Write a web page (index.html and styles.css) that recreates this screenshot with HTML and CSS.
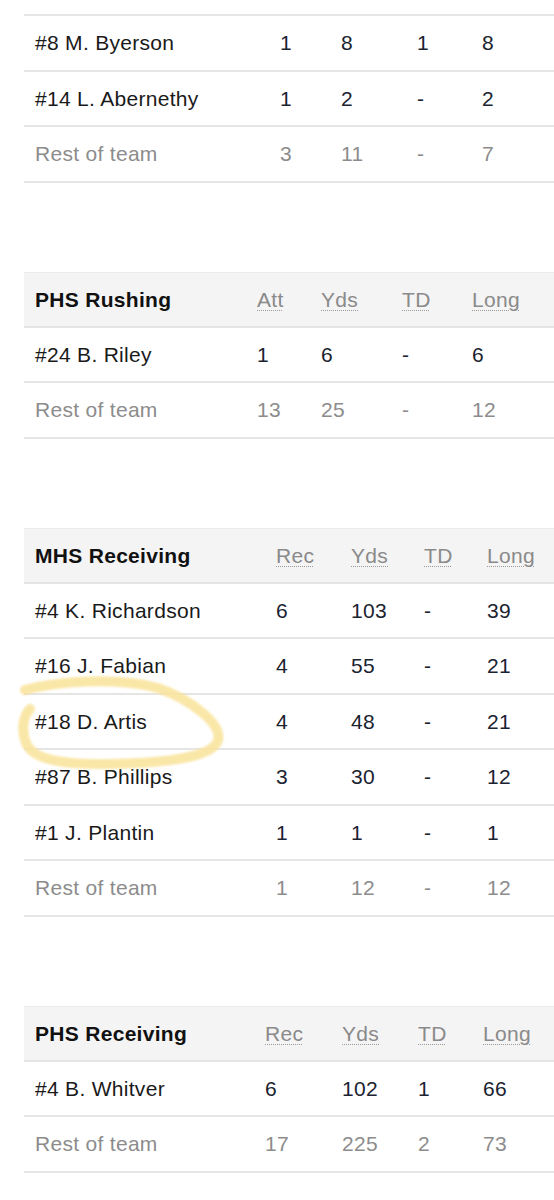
FILE: index.html
```html
<!DOCTYPE html>
<html lang="en">
<head>
<meta charset="utf-8">
<title>Box score</title>
<link rel="stylesheet" href="styles.css">
</head>
<body>
<main class="page">
  <section class="stat-block first">
    <table class="stats t-rush-m">
      <colgroup><col class="c1"><col class="c2"><col class="c3"><col class="c4"><col class="c5"></colgroup>
      <thead>
        <tr><th class="title">MHS Rushing</th><th><abbr title="Attempts">Att</abbr></th><th><abbr title="Yards">Yds</abbr></th><th><abbr title="Touchdowns">TD</abbr></th><th><abbr title="Longest">Long</abbr></th></tr>
      </thead>
      <tbody>
        <tr><td class="name">#2 T. Kennedy</td><td>2</td><td>9</td><td>-</td><td>6</td></tr>
        <tr><td class="name">#8 M. Byerson</td><td>1</td><td>8</td><td>1</td><td>8</td></tr>
        <tr><td class="name">#14 L. Abernethy</td><td>1</td><td>2</td><td>-</td><td>2</td></tr>
        <tr class="rest"><td class="name">Rest of team</td><td>3</td><td>11</td><td>-</td><td>7</td></tr>
      </tbody>
    </table>
  </section>

  <section class="stat-block">
    <table class="stats t-rush-p">
      <colgroup><col class="c1"><col class="c2"><col class="c3"><col class="c4"><col class="c5"></colgroup>
      <thead>
        <tr><th class="title">PHS Rushing</th><th><abbr title="Attempts">Att</abbr></th><th><abbr title="Yards">Yds</abbr></th><th><abbr title="Touchdowns">TD</abbr></th><th><abbr title="Longest">Long</abbr></th></tr>
      </thead>
      <tbody>
        <tr><td class="name">#24 B. Riley</td><td>1</td><td>6</td><td>-</td><td>6</td></tr>
        <tr class="rest"><td class="name">Rest of team</td><td>13</td><td>25</td><td>-</td><td>12</td></tr>
      </tbody>
    </table>
  </section>

  <section class="stat-block marked">
    <table class="stats t-rec-m">
      <colgroup><col class="c1"><col class="c2"><col class="c3"><col class="c4"><col class="c5"></colgroup>
      <thead>
        <tr><th class="title">MHS Receiving</th><th><abbr title="Receptions">Rec</abbr></th><th><abbr title="Yards">Yds</abbr></th><th><abbr title="Touchdowns">TD</abbr></th><th><abbr title="Longest">Long</abbr></th></tr>
      </thead>
      <tbody>
        <tr><td class="name">#4 K. Richardson</td><td>6</td><td>103</td><td>-</td><td>39</td></tr>
        <tr><td class="name">#16 J. Fabian</td><td>4</td><td>55</td><td>-</td><td>21</td></tr>
        <tr><td class="name">#18 D. Artis</td><td>4</td><td>48</td><td>-</td><td>21</td></tr>
        <tr><td class="name">#87 B. Phillips</td><td>3</td><td>30</td><td>-</td><td>12</td></tr>
        <tr><td class="name">#1 J. Plantin</td><td>1</td><td>1</td><td>-</td><td>1</td></tr>
        <tr class="rest"><td class="name">Rest of team</td><td>1</td><td>12</td><td>-</td><td>12</td></tr>
      </tbody>
    </table>
    <svg class="scribble" width="260" height="260" viewBox="0 0 260 260" aria-hidden="true">
      <defs>
        <filter id="soft" x="-10%" y="-10%" width="120%" height="120%">
          <feGaussianBlur stdDeviation="1.1"/>
        </filter>
      </defs>
      <path d="M 25 162 C 55 154, 115 148, 158 160 C 192 172, 222 196, 218 212 C 214 228, 172 235, 110 236 C 62 237, 32 231, 26 215 C 21 202, 23 188, 30 181"
            fill="none" stroke="#f9e39a" stroke-width="10" stroke-linecap="round" stroke-linejoin="round" filter="url(#soft)"/>
    </svg>
  </section>

  <section class="stat-block">
    <table class="stats t-rec-p">
      <colgroup><col class="c1"><col class="c2"><col class="c3"><col class="c4"><col class="c5"></colgroup>
      <thead>
        <tr><th class="title">PHS Receiving</th><th><abbr title="Receptions">Rec</abbr></th><th><abbr title="Yards">Yds</abbr></th><th><abbr title="Touchdowns">TD</abbr></th><th><abbr title="Longest">Long</abbr></th></tr>
      </thead>
      <tbody>
        <tr><td class="name">#4 B. Whitver</td><td>6</td><td>102</td><td>1</td><td>66</td></tr>
        <tr class="rest"><td class="name">Rest of team</td><td>17</td><td>225</td><td>2</td><td>73</td></tr>
      </tbody>
    </table>
  </section>
</main>
</body>
</html>
```

FILE: styles.css
```css
html, body {
  margin: 0;
  padding: 0;
  background: #ffffff;
}

body {
  font-family: "Liberation Sans", Arial, Helvetica, sans-serif;
  font-size: 21px;
  letter-spacing: 0.3px;
  color: #1a1a1a;
  overflow: hidden;
}

.page {
  display: flex;
  flex-direction: column;
  gap: 89.5px;
  padding-left: 24px;
}

.stat-block {
  position: relative;
}

.stat-block.first {
  margin-top: -95px;
}

.stats {
  width: 530px;
  table-layout: fixed;
  border-collapse: separate;
  border-spacing: 0;
}

.stats th,
.stats td {
  box-sizing: border-box;
  height: 55.5px;
  padding: 0 0 0 11px;
  text-align: left;
  vertical-align: middle;
  white-space: nowrap;
  border-bottom: 2px solid #e5e5e5;
  font-weight: normal;
  line-height: 1;
}

.stats thead th {
  background: #f4f4f4;
  color: #8a8a8a;
  border-top: 1px solid #ececec;
}

.stats thead th.title {
  color: #111111;
  font-weight: bold;
}

.stats abbr {
  text-decoration: underline dotted #9a9a9a;
  text-decoration-thickness: 1px;
  text-underline-offset: 3px;
}

.stats tbody td {
  color: #1b2330;
}

.stats tbody td.name {
  color: #1a1a1a;
}

.stats tbody tr.rest td,
.stats tbody tr.rest td.name {
  color: #8c8c8c;
}

/* column widths, per table */
.t-rush-m .c1 { width: 245px; }
.t-rush-m .c2 { width: 61px; }
.t-rush-m .c3 { width: 76px; }
.t-rush-m .c4 { width: 65px; }
.t-rush-m .c5 { width: 83px; }

.t-rush-p .c1 { width: 222px; }
.t-rush-p .c2 { width: 64px; }
.t-rush-p .c3 { width: 81px; }
.t-rush-p .c4 { width: 70px; }
.t-rush-p .c5 { width: 93px; }

.t-rec-m .c1 { width: 241px; }
.t-rec-m .c2 { width: 75px; }
.t-rec-m .c3 { width: 73px; }
.t-rec-m .c4 { width: 63px; }
.t-rec-m .c5 { width: 78px; }

.t-rec-p .c1 { width: 230px; }
.t-rec-p .c2 { width: 77px; }
.t-rec-p .c3 { width: 76px; }
.t-rec-p .c4 { width: 65px; }
.t-rec-p .c5 { width: 82px; }

/* hand-drawn highlight over the table */
.scribble {
  position: absolute;
  left: -24px;
  top: 0;
  pointer-events: none;
  opacity: 0.85;
}
```
